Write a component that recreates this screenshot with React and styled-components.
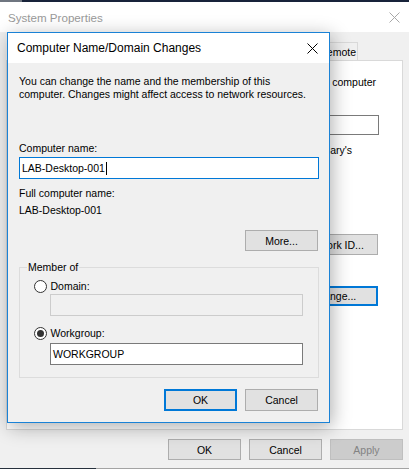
import React from 'react';
import styled, { createGlobalStyle } from 'styled-components';

const Global = createGlobalStyle`
  html, body { margin: 0; padding: 0; background: #f0f0f0; }
  body { font-family: "Liberation Sans", Arial, sans-serif; font-size: 10.5px; color: #000; }
  * { box-sizing: border-box; }
`;

const Screen = styled.div`
  position: relative;
  width: 409px;
  height: 469px;
  display: flex;
  flex-direction: column;
  overflow: hidden;
  background: #f0f0f0;
`;

const Strip = styled.div`
  display: flex;
  flex: none;
  height: ${p => p.h}px;
`;

const StripSeg = styled.div`
  flex: ${p => (p.w ? 'none' : 1)};
  width: ${p => (p.w ? `${p.w}px` : 'auto')};
  background: ${p => p.c};
`;

const Window = styled.div`
  flex: 1;
  display: flex;
  flex-direction: column;
  background: #f0f0f0;
`;

const TitleBar = styled.div`
  flex: none;
  height: 30px;
  background: #fff;
  display: flex;
  align-items: center;
  justify-content: space-between;
  padding: ${p => p.pad};
  color: ${p => (p.inactive ? '#9a9a9a' : '#000')};
  font-size: ${p => p.fs}px;
`;

const CloseIcon = ({ color }) => (
  <svg width="11" height="11" viewBox="0 0 11 11">
    <path d="M0.5 0.5 L10.5 10.5 M10.5 0.5 L0.5 10.5" stroke={color} strokeWidth="1" fill="none" />
  </svg>
);

const WinBody = styled.div`
  flex: 1;
  display: flex;
  flex-direction: column;
  padding: 10px 6px 0 6px;
`;

const TabRow = styled.div`
  display: flex;
  height: 18px;
  flex: none;
`;

const Tab = styled.div`
  margin-left: 310px;
  width: 42px;
  height: 18px;
  border: 1px solid #d9d9d9;
  border-bottom: none;
  background: #f0f0f0;
  display: flex;
  align-items: center;
  justify-content: flex-end;
  padding: 1px 1px 0 0;
`;

const Panel = styled.div`
  flex: none;
  height: 370px;
  background: #fff;
  border: 1px solid #d9d9d9;
  display: flex;
  flex-direction: column;
  align-items: flex-end;
  padding: 14.5px 24px 0 0;
  overflow: hidden;
`;

const PanelLine = styled.div`
  white-space: nowrap;
  line-height: 13px;
  margin-top: ${p => p.mt || 0}px;
  margin-right: ${p => p.mr || 0}px;
`;

const Field = styled.div`
  width: ${p => p.w}px;
  height: ${p => p.h}px;
  margin-top: ${p => p.mt || 0}px;
  margin-left: ${p => p.ml || 0}px;
  margin-right: ${p => p.mr || 0}px;
  background: ${p => (p.disabled ? '#f0f0f0' : '#fff')};
  border: 1px solid ${p => (p.focused ? '#0078d7' : p.disabled ? '#cccccc' : '#7a7a7a')};
  display: flex;
  align-items: center;
  padding-left: 2px;
  white-space: nowrap;
  flex: none;
`;

const Caret = styled.span`
  display: inline-block;
  width: 1px;
  height: 13px;
  background: #000;
  margin-left: 1px;
`;

const Button = styled.div`
  width: ${p => p.w || 73}px;
  height: ${p => p.h || 21}px;
  margin-top: ${p => p.mt || 0}px;
  margin-right: ${p => p.mr || 0}px;
  flex: none;
  background: ${p => (p.disabled ? '#cccccc' : '#e1e1e1')};
  border: ${p => (p.isDefault ? '2px solid #0078d7' : p.disabled ? '1px solid #bfbfbf' : '1px solid #adadad')};
  color: ${p => (p.disabled ? '#838383' : '#000')};
  display: flex;
  align-items: center;
  justify-content: center;
  white-space: nowrap;
  overflow: hidden;
`;

const BottomRow = styled.div`
  display: flex;
  justify-content: flex-end;
  gap: 8px;
  margin-top: 9px;
`;

const Dialog = styled.div`
  position: absolute;
  left: 7px;
  top: 32px;
  width: 323px;
  height: 391px;
  border: 1px solid #1a82d6;
  background: #f0f0f0;
  display: flex;
  flex-direction: column;
  box-shadow: 2px 4px 18px rgba(0, 0, 0, 0.32);
`;

const DialogBody = styled.div`
  flex: 1;
  display: flex;
  flex-direction: column;
  padding: 11.5px 10px 0 11px;
`;

const Text = styled.div`
  line-height: 13px;
  margin-top: ${p => p.mt || 0}px;
  white-space: nowrap;
`;

const RightRow = styled.div`
  display: flex;
  justify-content: flex-end;
  gap: 8px;
  margin-top: ${p => p.mt || 0}px;
`;

const GroupBox = styled.div`
  margin-top: ${p => p.mt || 0}px;
  height: 111px;
  border: 1px solid #dcdcdc;
  display: flex;
  flex-direction: column;
  align-items: flex-start;
`;

const Legend = styled.div`
  margin: -7.5px 0 0 7px;
  padding: 0 1px;
  line-height: 13px;
  background: #f0f0f0;
`;

const RadioRow = styled.div`
  display: flex;
  align-items: center;
  gap: 4px;
  height: 13px;
  margin-top: ${p => p.mt || 0}px;
  margin-left: 13.5px;
`;

const RadioCircle = styled.span`
  width: 13px;
  height: 13px;
  border-radius: 50%;
  border: 1px solid #333;
  background: #fff;
  display: flex;
  align-items: center;
  justify-content: center;
  flex: none;
  &::after {
    content: '';
    display: ${p => (p.checked ? 'block' : 'none')};
    width: 7px;
    height: 7px;
    border-radius: 50%;
    background: #333;
  }
`;

export default function App() {
  return (
    <>
      <Global />
      <Screen>
        <Strip h={2}>
          <StripSeg w={22} c="#6f7680" />
          <StripSeg c="#18233a" />
        </Strip>
        <Window>
          <TitleBar inactive fs={11.6} pad="0 9px 0 8px">
            <span>System Properties</span>
            <CloseIcon color="#a8a8a8" />
          </TitleBar>
          <WinBody>
            <TabRow>
              <Tab>Remote</Tab>
            </TabRow>
            <Panel>
              <PanelLine mr={2}>computer</PanelLine>
              <Field w={230} h={20} mt={26.5} mr={-1} />
              <PanelLine mt={8.5} mr={26}>Mary's</PanelLine>
              <Button w={89} mt={77.5}>Network ID...</Button>
              <Button w={89} mt={31} h={20} isDefault>Change...</Button>
            </Panel>
            <BottomRow>
              <Button>OK</Button>
              <Button>Cancel</Button>
              <Button disabled>Apply</Button>
            </BottomRow>
          </WinBody>
        </Window>
        <Strip h={1}>
          <StripSeg w={96} c="#26303c" />
          <StripSeg c="#a3a3a3" />
        </Strip>

        <Dialog>
          <TitleBar fs={12} pad="0 11px 0 9px">
            <span>Computer Name/Domain Changes</span>
            <CloseIcon color="#000" />
          </TitleBar>
          <DialogBody>
            <Text>You can change the name and the membership of this</Text>
            <Text>computer. Changes might affect access to network resources.</Text>
            <Text mt={41}>Computer name:</Text>
            <Field w={300} h={22} mt={2.5} focused>
              LAB-Desktop-001<Caret />
            </Field>
            <Text mt={7.5}>Full computer name:</Text>
            <Text mt={4}>LAB-Desktop-001</Text>
            <RightRow mt={13.5}>
              <Button mr={1}>More...</Button>
            </RightRow>
            <GroupBox mt={16}>
              <Legend>Member of</Legend>
              <RadioRow mt={6}>
                <RadioCircle />
                <span>Domain:</span>
              </RadioRow>
              <Field w={253} h={22} mt={1.5} ml={30} disabled />
              <RadioRow mt={10.5}>
                <RadioCircle checked />
                <span>Workgroup:</span>
              </RadioRow>
              <Field w={253} h={22} mt={3.5} ml={30}>WORKGROUP</Field>
            </GroupBox>
            <RightRow mt={11}>
              <Button h={22} isDefault>OK</Button>
              <Button h={22} mr={1}>Cancel</Button>
            </RightRow>
          </DialogBody>
        </Dialog>
      </Screen>
    </>
  );
}
